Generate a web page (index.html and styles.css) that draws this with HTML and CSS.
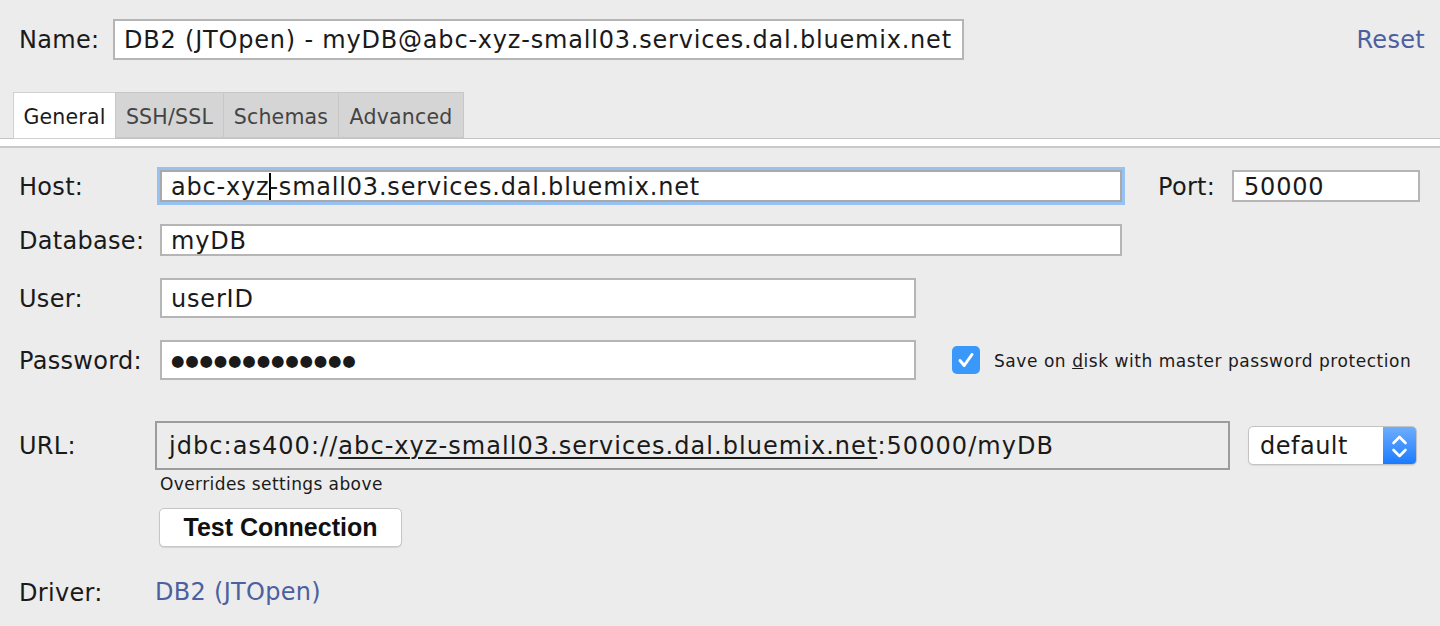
FILE: index.html
```html
<!DOCTYPE html>
<html>
<head>
<meta charset="utf-8">
<link rel="stylesheet" href="styles.css">
</head>
<body>
<div class="top">
  <span class="name-label">Name:</span>
  <div class="field name-field">DB2 (JTOpen) - myDB@abc-xyz-small03.services.dal.bluemix.net</div>
  <a class="reset">Reset</a>
</div>
<div class="tabs">
  <div class="tab active tab-general">General</div>
  <div class="tab tab-ssh">SSH/SSL</div>
  <div class="tab tab-schemas">Schemas</div>
  <div class="tab tab-advanced">Advanced</div>
</div>
<div class="band"></div>
<div class="form">
  <div class="row row-host">
    <span class="label">Host:</span>
    <div class="field host-field focused">abc-xyz<span class="caret"></span>-small03.services.dal.bluemix.net</div>
    <span class="port-label">Port:</span>
    <div class="field port-field">50000</div>
  </div>
  <div class="row row-db">
    <span class="label">Database:</span>
    <div class="field db-field">myDB</div>
  </div>
  <div class="row row-user">
    <span class="label">User:</span>
    <div class="field user-field">userID</div>
  </div>
  <div class="row row-pass">
    <span class="label">Password:</span>
    <div class="field user-field pass-field"><span class="dots">●●●●●●●●●●●●●</span></div>
    <span class="checkbox">
      <svg width="28" height="28" viewBox="0 0 28 28"><path d="M8 14.5 L12.2 19.5 L20 8.5" fill="none" stroke="#fff" stroke-width="3" stroke-linecap="round" stroke-linejoin="round"/></svg>
    </span>
    <span class="check-text">Save on <u>d</u>isk with master password protection</span>
  </div>
  <div class="row row-url">
    <span class="label url-label">URL:</span>
    <div class="url-field">jdbc:as400://<u>abc-xyz-small03.services.dal.bluemix.net</u>:50000/myDB</div>
    <div class="select">
      <span class="select-text">default</span>
      <span class="select-arrows">
        <svg width="33" height="39" viewBox="0 0 33 39"><path d="M10.5 16 L16.5 10 L22.5 16" fill="none" stroke="#fff" stroke-width="2.6" stroke-linecap="round" stroke-linejoin="round"/><path d="M10.5 23 L16.5 29 L22.5 23" fill="none" stroke="#fff" stroke-width="2.6" stroke-linecap="round" stroke-linejoin="round"/></svg>
      </span>
    </div>
  </div>
  <div class="hint">Overrides settings above</div>
  <button class="btn">Test Connection</button>
  <div class="row row-driver">
    <span class="label url-label">Driver:</span>
    <a class="driver-link">DB2 (JTOpen)</a>
  </div>
</div>
</body>
</html>
```
FILE: styles.css
```css
html, body {
  margin: 0;
  padding: 0;
  background: #ececec;
  font-family: "DejaVu Sans", "Lucida Grande", sans-serif;
  font-size: 24px;
  letter-spacing: 0.3px;
  color: #1a1a1a;
  overflow: hidden;
}
.top {
  display: flex;
  align-items: center;
  padding: 20px 15px 0 19px;
  height: 40px;
}
.name-label {
  width: 94px;
}
.field {
  box-sizing: border-box;
  background: #fff;
  border: 2px solid #b5b5b5;
  display: flex;
  align-items: center;
  white-space: nowrap;
  overflow: hidden;
  letter-spacing: 0.8px;
  padding-top: 1px;
}
.name-field {
  width: 851px;
  height: 41px;
  padding-left: 9px;
  margin-top: -1px;
}
.reset {
  margin-left: auto;
  color: #4c5f9e;
}
.tabs {
  display: flex;
  margin-top: 32px;
  padding-left: 13px;
  height: 46px;
  border-bottom: 1px solid #c4c4c4;
}
.tab {
  box-sizing: border-box;
  height: 46px;
  padding: 3px 0 0;
  display: flex;
  align-items: center;
  justify-content: center;
  background: #d5d5d5;
  border: 1px solid #c7c7c7;
  border-right: none;
  color: #444;
  font-size: 20.5px;
  letter-spacing: 0.2px;
}
.tab:last-child {
  border-right: 1px solid #c7c7c7;
}
.tab-general { width: 102px; }
.tab-ssh { width: 108px; }
.tab-schemas { width: 115px; }
.tab-advanced { width: 126px; }
.tab.active {
  background: #fff;
  color: #1a1a1a;
  height: 47px;
  margin-bottom: -1px;
  border-color: #d0d0d0;
}
.band {
  height: 7px;
  background: #fff;
  border-bottom: 2px solid #c9c9c9;
}
.form {
  padding: 22px 0 0 19px;
}
.row {
  display: flex;
  align-items: center;
}
.label {
  width: 141px;
  flex: none;
  padding-top: 1px;
}
.url-label {
  width: 136px;
}
.row-host {
  height: 32px;
}
.host-field {
  width: 962px;
  height: 32px;
  padding-left: 9px;
}
.focused {
  box-shadow: 0 0 0 3px #98c1f3;
  border-color: #a9a9a9;
}
.caret {
  display: inline-block;
  width: 0;
  height: 27px;
  border-left: 2px solid #000;
  margin-right: -2px;
}
.port-label {
  margin-left: 36px;
  width: 74px;
  padding-top: 1px;
}
.port-field {
  width: 188px;
  height: 32px;
  padding-left: 10px;
}
.row-db {
  margin-top: 22px;
  height: 32px;
}
.db-field {
  width: 962px;
  height: 32px;
  padding-left: 9px;
}
.row-user {
  margin-top: 22px;
  height: 40px;
}
.user-field {
  width: 756px;
  height: 40px;
  padding-left: 9px;
}
.row-pass {
  margin-top: 22px;
  height: 40px;
}
.dots {
  font-size: 15.5px;
  letter-spacing: 0.75px;
}
.checkbox {
  margin-left: 36px;
  width: 28px;
  height: 28px;
  border-radius: 5px;
  background: #3a98fb;
  display: flex;
}
.check-text {
  margin-left: 14px;
  font-size: 17px;
  letter-spacing: 0.55px;
  padding-top: 2px;
}
.row-url {
  margin-top: 41px;
  height: 49px;
}
.url-field {
  box-sizing: border-box;
  width: 1075px;
  height: 49px;
  border: 2px solid #9c9c9c;
  padding-left: 12px;
  padding-top: 1px;
  display: flex;
  align-items: center;
  white-space: nowrap;
  letter-spacing: 1.05px;
}
.url-field u {
  text-decoration-thickness: 2px;
  text-underline-offset: 3px;
}
.select {
  box-sizing: border-box;
  margin-left: 18px;
  width: 169px;
  height: 39px;
  border: 1px solid #c3c3c3;
  border-radius: 5px;
  background: #fff;
  display: flex;
  overflow: hidden;
  box-shadow: 0 1px 1px rgba(0,0,0,0.08);
}
.select-text {
  flex: 1;
  padding-left: 11px;
  padding-top: 1px;
  display: flex;
  align-items: center;
  letter-spacing: 0.5px;
}
.select-arrows {
  width: 33px;
  background: linear-gradient(#6eaefc, #1a7bff);
  display: flex;
}
.hint {
  margin-top: 4px;
  padding-left: 141px;
  font-size: 17px;
  line-height: 20px;
  letter-spacing: 0.4px;
}
.btn {
  display: block;
  margin: 14px 0 0 140px;
  width: 243px;
  height: 39px;
  background: #fff;
  border: 1px solid #c6c6c6;
  border-radius: 5px;
  box-shadow: 0 1px 1px rgba(0,0,0,0.1);
  font-family: "Liberation Sans", Arial, sans-serif;
  font-weight: bold;
  font-size: 25px;
  letter-spacing: 0;
  color: #111;
  padding: 0;
}
.row-driver {
  margin-top: 30px;
  height: 30px;
}
.driver-link {
  color: #4c5f9e;
}
```
